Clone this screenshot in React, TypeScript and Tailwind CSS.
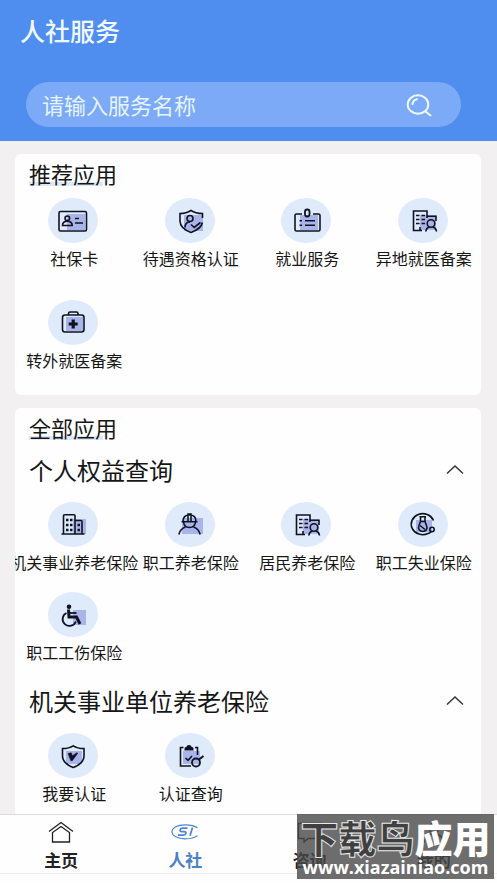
import type { ReactNode } from "react";

const INK = "#10131f";
const TINT = "#a9b4ea";

function Disc({ children }: { children: ReactNode }) {
  return (
    <svg className="h-[45px] w-[50px]" viewBox="0 0 50 45" fill="none" stroke={INK} strokeWidth="1.6" aria-hidden="true">
      <ellipse cx="25" cy="22.5" rx="25" ry="22.5" fill="#dfeafb" stroke="none" />
      {children}
    </svg>
  );
}

function Tint({ x, y, w, h }: { x: number; y: number; w: number; h: number }) {
  return <rect x={x} y={y} width={w} height={h} fill={TINT} stroke="none" />;
}

function CardIcon() {
  return (
    <Disc>
      <Tint x={19} y={16} w={18} h={16} />
      <rect x="11" y="13.5" width="27.5" height="19.5" rx="1.5" />
      <circle cx="19.3" cy="20.3" r="2.3" />
      <path d="M14.5 27.5c0-3 2-4.300 4.800-4.300s4.900 1.300 4.900 4.300z" />
      <path d="M27 20.500h4M27 25h8" />
    </Disc>
  );
}

function ShieldPersonIcon() {
  return (
    <Disc>
      <Tint x={19} y={17} w={19} h={16} />
      <path d="M37.500 20v-4.500c-5 0-8.500-1-11.500-3-3 2-6.500 3-11 3V23c0 6 4.500 9 11 11.500 6.500-2.500 10.500-5 11.500-10" />
      <circle cx="25" cy="20.500" r="3" />
      <path d="M20 29.500c0-4 2-5.500 5-5.500M26 26.500l3.200 3 6.300-5" />
    </Disc>
  );
}

function BadgeIcon() {
  return (
    <Disc>
      <Tint x={19} y={17} w={18} h={15} />
      <path d="M21 16h-5.500a1.500 1.500 0 0 0-1.500 1.500v14A1.500 1.500 0 0 0 15.500 33h22a1.500 1.500 0 0 0 1.500-1.500v-14a1.500 1.500 0 0 0-1.500-1.500H32" />
      <rect x="24" y="11.500" width="4.500" height="7" rx="2.200" strokeWidth="1.800" />
      <path d="M18.500 22.800h2.500M24 22.800h10M18.500 27.300h2.500M24 27.300h10" />
    </Disc>
  );
}

function RecordIcon() {
  return (
    <Disc>
      <Tint x={22} y={17} w={16} h={15} />
      <path d="M24 32.500H15.500v-19.500H29V20M29 18.300h9V23" />
      <path d="M18 17.500h3.500M23.500 17.500H27M18 21.500h3.500M23.500 21.500H27M18 25.500h3.500M23.500 25.500H27M22 32v-3" />
      <circle cx="33" cy="25.500" r="3.800" />
      <path d="M27.800 33.500c.3-2.500 1.500-4 3.500-4.500M35 29c2 .5 3.200 2 3.500 4.500" />
    </Disc>
  );
}

function MedkitIcon() {
  return (
    <Disc>
      <Tint x={18} y={17} w={17} h={14} />
      <rect x="14.500" y="15" width="21.500" height="17" rx="2.500" />
      <path d="M20.500 15v-1.500a1.500 1.500 0 0 1 1.500-1.500h6.500a1.500 1.500 0 0 1 1.500 1.500V15" />
      <path d="M25.200 19.500v9M20.700 24h9" strokeWidth="3.200" />
    </Disc>
  );
}

function BuildingIcon() {
  return (
    <Disc>
      <Tint x={25} y={17} w={13} h={15} />
      <path d="M13.500 32h23M15.500 32V13.800a1 1 0 0 1 1-1H26a1 1 0 0 1 1 1V32M27 18.500h6a1 1 0 0 1 1 1V32" />
      <path d="M18 18h2.500M22 18h2.500M18 23h2.500M22 23h2.500M18 28h2.500M22 28h2.500M29.500 23H32M29.500 28H32" strokeWidth="2.300" />
    </Disc>
  );
}

function WorkerIcon() {
  return (
    <Disc>
      <Tint x={17} y={16} w={21} h={16} />
      <path d="M18 19.500c0-4 2.500-6.500 6.500-6.500s6.500 2.500 6.500 6.500M16.500 19.700h16M23 19v-7h3v7M18.500 20c.5 4 2.800 5.500 6 5.500s5.500-1.500 6-5.500" />
      <path d="M13.800 32.500c1-4 3.500-6.500 6.700-7.500M28.500 25c3.200 1 5.700 3.500 6.700 7.500" />
    </Disc>
  );
}

function FlaskIcon() {
  return (
    <Disc>
      <Tint x={18} y={18} w={16} h={12} />
      <path d="M35.500 18.500A11.500 10.500 0 1 0 30 31.500M30 31.500c2.500-.5 3-1.500 3-2.500" />
      <path d="M21.500 14.700h6.500M22.500 15v4.500M27 15v4.500M22.500 19.500h4.500l1.500 4c1.500 3.500-.5 6-3.700 6s-5.300-2.500-3.800-6z" />
      <path d="M22 23.500l5 4" />
      <circle cx="34" cy="27.500" r="2.200" />
    </Disc>
  );
}

function WheelchairIcon() {
  return (
    <Disc>
      <Tint x={25} y={18} w={13} h={15} />
      <circle cx="21" cy="14.800" r="2.300" fill={INK} stroke="none" />
      <path d="M20.500 17.500l.5 7.500h7.500l3.500 7" strokeWidth="3" />
      <path d="M21 21h7.500" strokeWidth="1.800" />
      <path d="M18.500 21a6.800 6.800 0 1 0 9.300 8.500" strokeWidth="1.800" />
    </Disc>
  );
}

function ShieldCheckIcon() {
  return (
    <Disc>
      <Tint x={18} y={18} w={16} h={13} />
      <path d="M25.200 12.800c-3 2-6.500 2.700-10.700 2.700V23c0 6 4.500 9 10.700 11.500C31.500 32 36 29 36 23v-7.500c-4.200 0-7.800-.7-10.800-2.700z" />
      <path d="M20 20.500l3.200-.8 1.300 3 4.300-3 1 .5-5.500 7.500h-1.500z" fill={INK} strokeWidth="0.500" />
    </Disc>
  );
}

function ClipboardSearchIcon() {
  return (
    <Disc>
      <Tint x={18} y={18} w={17} h={13} />
      <path d="M18.500 14.500h-3V33H26M30 14.500h2.500V22" />
      <path d="M19.500 17.500v-2c0-1 1-1.500 2-1.500 0-1.300 1-2 2.500-2s2.500.7 2.500 2c1 0 2 .5 2 1.500v2z" fill={INK} stroke="none" />
      <path d="M20.500 25l2.500 2.300 4-4.300" />
      <circle cx="31" cy="29.500" r="4" strokeWidth="1.800" />
      <path d="M34 26.500l4.500-3.500" strokeWidth="2" />
    </Disc>
  );
}

type Item = { label: string; icon: ReactNode };

const recommended: Item[] = [
  { label: "社保卡", icon: <CardIcon /> },
  { label: "待遇资格认证", icon: <ShieldPersonIcon /> },
  { label: "就业服务", icon: <BadgeIcon /> },
  { label: "异地就医备案", icon: <RecordIcon /> },
  { label: "转外就医备案", icon: <MedkitIcon /> },
];

const personal: Item[] = [
  { label: "机关事业养老保险", icon: <BuildingIcon /> },
  { label: "职工养老保险", icon: <WorkerIcon /> },
  { label: "居民养老保险", icon: <RecordIcon /> },
  { label: "职工失业保险", icon: <FlaskIcon /> },
  { label: "职工工伤保险", icon: <WheelchairIcon /> },
];

const institution: Item[] = [
  { label: "我要认证", icon: <ShieldCheckIcon /> },
  { label: "认证查询", icon: <ClipboardSearchIcon /> },
];

function Grid({ items, gap }: { items: Item[]; gap: string }) {
  return (
    <div className={`grid grid-cols-4 ${gap}`}>
      {items.map((item) => (
        <button key={item.label} type="button" className="flex min-w-0 flex-col items-center gap-1">
          {item.icon}
          <span className="pl-0.5 text-base leading-[22px] whitespace-nowrap">{item.label}</span>
        </button>
      ))}
    </div>
  );
}

function CardTitle({ children }: { children: string }) {
  return (
    <h2 className="flex pl-3.5 text-[22px] leading-[30px]">
      <span className="bg-[linear-gradient(#dde7fa,#dde7fa)] bg-[length:74px_4px] bg-[position:0_24px] bg-no-repeat">{children}</span>
    </h2>
  );
}

function SectionTitle({ children }: { children: string }) {
  return (
    <h3>
      <button type="button" aria-expanded="true" className="flex w-full items-center justify-between pr-4 pl-3.5 text-2xl leading-9">
        {children}
        <svg className="h-5 w-5" viewBox="0 0 20 20" fill="none" stroke="#333" strokeWidth="1.400" aria-hidden="true">
          <path d="M2 13.500 10 6l8 7.500" />
        </svg>
      </button>
    </h3>
  );
}

function HomeIcon() {
  return (
    <svg className="h-6 w-7" viewBox="0 0 28 24" fill="none" stroke="#222" strokeWidth="1.300" aria-hidden="true">
      <path d="M2 10.500 14 1.500l12 9M5.500 11.500V21h17v-9.500L14 5.500z" />
    </svg>
  );
}

function SiIcon() {
  return (
    <svg className="h-6 w-7" viewBox="0 0 28 24" fill="none" stroke="#4a86cf" strokeWidth="1.200" aria-hidden="true">
      <path d="M26.500 7C24 5 19.500 3.800 14 3.800 6.500 3.800 1 6.800 1 10.800s5.500 7 13 7c5.500 0 10-1.200 12.500-3.200" />
      <path d="M16.500 7.200h-4.800c-3 0-3.800 3.400-.8 3.400h2.200c3 0 2.200 3.600-.8 3.600H7M21.500 6.500 19 14.800" strokeWidth="1.700" />
    </svg>
  );
}

function ChatIcon() {
  return (
    <svg className="h-6 w-7" viewBox="0 0 28 24" fill="none" stroke="#222" strokeWidth="1.300" aria-hidden="true">
      <path d="M2.500 2.500h23v15H12l-4 3.500v-3.500H2.500z" />
    </svg>
  );
}

function UserIcon() {
  return (
    <svg className="h-6 w-7" viewBox="0 0 28 24" fill="none" stroke="#222" strokeWidth="1.300" aria-hidden="true">
      <circle cx="14" cy="7" r="5" />
      <path d="M4 22c1-6 5-9 10-9s9 3 10 9" />
    </svg>
  );
}

const tabs = [
  { label: "主页", icon: <HomeIcon />, active: false },
  { label: "人社", icon: <SiIcon />, active: true },
  { label: "咨询", icon: <ChatIcon />, active: false },
  { label: "我的", icon: <UserIcon />, active: false },
];

export default function App() {
  return (
    <div className="relative flex h-screen flex-col overflow-hidden bg-[#f2f0f0] font-['Noto_Sans_CJK_SC',sans-serif] text-[#161616]">
      <header className="shrink-0 bg-[#4f8eee] pt-3 pb-3.5">
        <h1 className="pl-5 text-[25px] leading-9 font-medium text-[#f0f9ff]">人社服务</h1>
        <form role="search" className="mt-[34px] mr-9 ml-[26px] flex h-[45px] items-center rounded-full bg-[#7caaf7] pr-7 pl-4">
          <input
            type="text"
            aria-label="请输入服务名称"
            placeholder="请输入服务名称"
            className="min-w-0 flex-1 bg-transparent pb-0.5 text-[22px] leading-8 outline-none placeholder:text-[#e6f4ff] placeholder:opacity-100"
          />
          <button type="button" aria-label="搜索">
            <svg className="h-7 w-7" viewBox="0 0 28 28" fill="none" stroke="#ecfaff" strokeWidth="2" strokeLinecap="round" aria-hidden="true">
              <ellipse cx="13" cy="13.500" rx="10.300" ry="9.300" />
              <path d="M7.500 13c.4-2.500 2-4.200 4.500-4.700M20.500 20.500l5 4" />
            </svg>
          </button>
        </form>
      </header>

      <main className="min-h-0 flex-1 overflow-hidden pt-[13px] pr-4 pl-[15px]">
        <section className="overflow-hidden rounded-md bg-[#fefefe] pt-1 pb-6">
          <CardTitle>推荐应用</CardTitle>
          <div className="pt-2.5">
            <Grid items={recommended} gap="gap-y-[31px]" />
          </div>
        </section>

        <section className="mt-[13px] overflow-hidden rounded-md bg-[#fefefe] pt-1 pb-6">
          <CardTitle>全部应用</CardTitle>
          <div className="pt-2.5">
            <SectionTitle>个人权益查询</SectionTitle>
          </div>
          <div className="pt-3.5">
            <Grid items={personal} gap="gap-y-[19px]" />
          </div>
          <div className="pt-5">
            <SectionTitle>机关事业单位养老保险</SectionTitle>
          </div>
          <div className="pt-3.5">
            <Grid items={institution} gap="gap-y-[19px]" />
          </div>
        </section>
      </main>

      <nav className="grid shrink-0 grid-cols-4 border-t border-[#dcd9d9] bg-[#fefefe]">
        {tabs.map((tab) => (
          <a
            key={tab.label}
            href="#"
            aria-current={tab.active ? "page" : undefined}
            className={`flex flex-col items-center pt-1.5 pr-0.5 ${tab.active ? "text-[#4a82c8]" : "text-[#222]"}`}
          >
            {tab.icon}
            <span className="mt-1 mb-0.5 text-[17px] leading-[22px] font-bold">{tab.label}</span>
          </a>
        ))}
        <div className="col-span-4 h-[10px] border-t border-[#eeeeee]" />
      </nav>

      <div className="pointer-events-none absolute right-[3px] bottom-1 flex h-[65px] w-[197px] flex-col items-center justify-center bg-[#484848]/80 text-white">
        <div className="text-[38px] leading-10 font-black whitespace-nowrap">
          <span className="text-[#404040] [-webkit-text-stroke:1px_#e8e8e8]">下载鸟</span>
          <span>应用</span>
        </div>
        <div className="font-['Open_Sans',sans-serif] text-[18px] leading-5 font-bold whitespace-nowrap">www.xiazainiao.com</div>
      </div>
    </div>
  );
}
